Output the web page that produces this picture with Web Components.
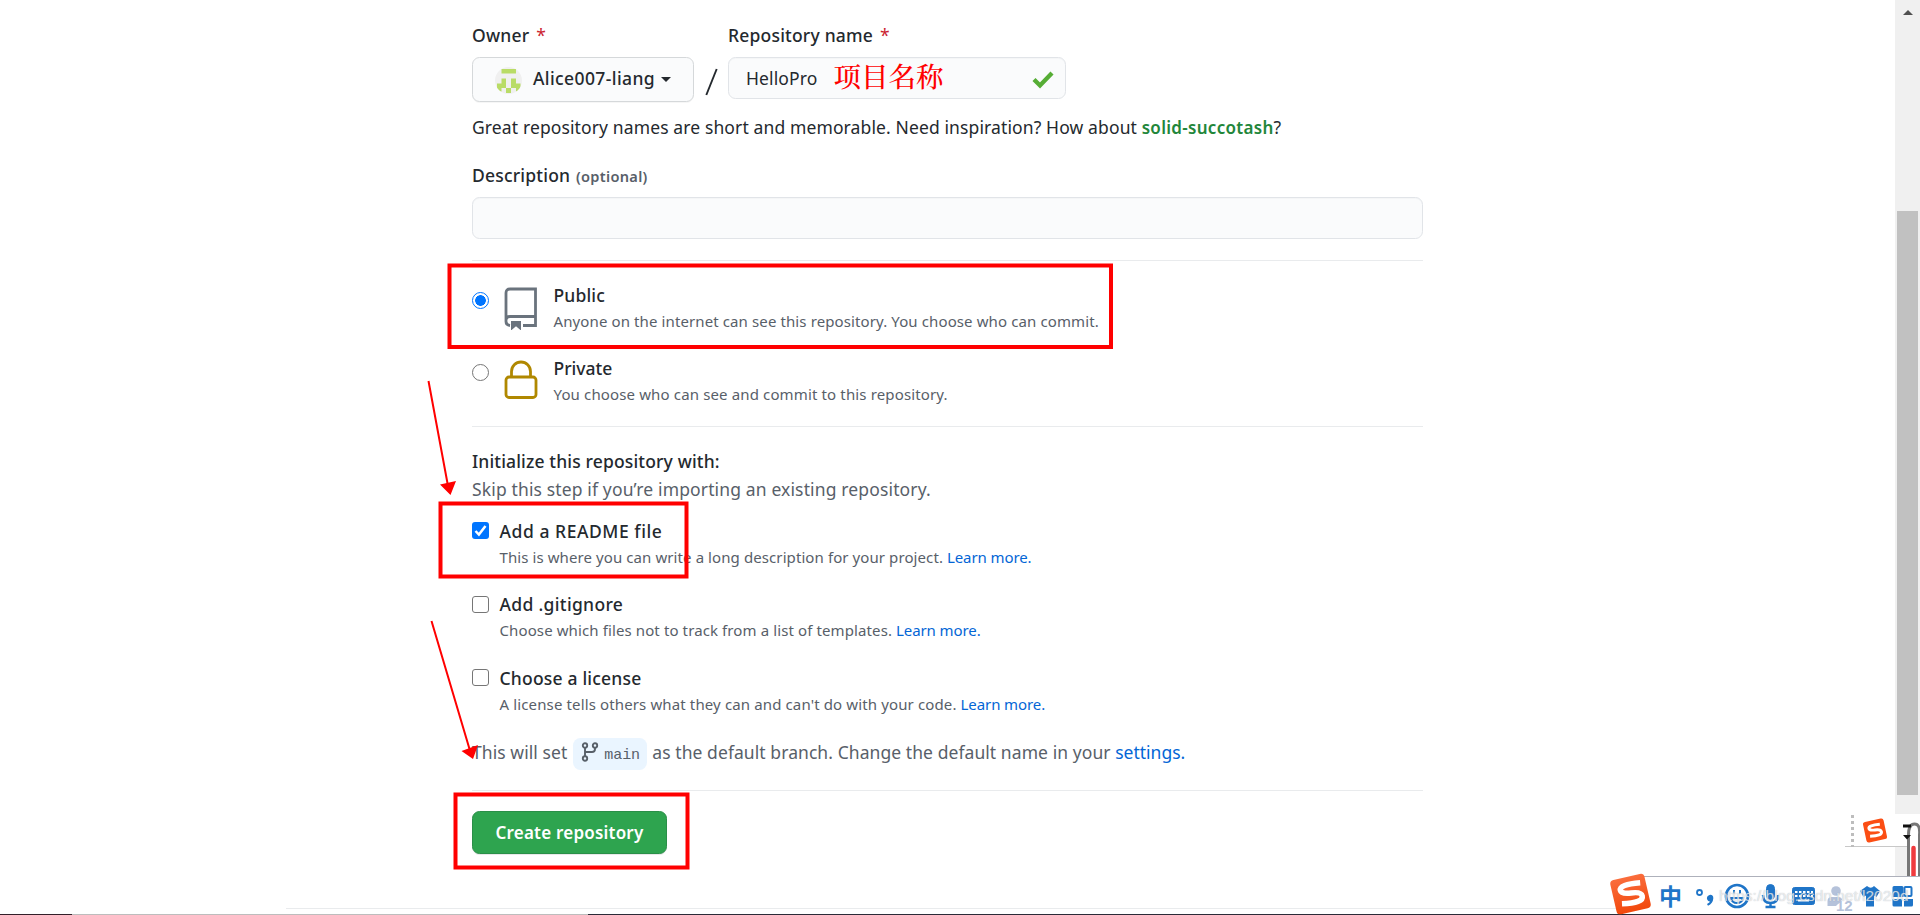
<!DOCTYPE html>
<html lang="en">
<head>
<meta charset="utf-8">
<title>Create a New Repository</title>
<style>
  html,body{margin:0;height:100%;overflow:hidden;background:#fff}
  body{font:400 17.5px/26px "Noto Sans","Noto Sans CJK SC",sans-serif;color:#24292e;letter-spacing:.12px}
</style>
</head>
<body>
<new-repo-page></new-repo-page>

<script>
/* small base: every element gets an open root with its own style + markup */
class View extends HTMLElement {
    constructor() {
        super();
        this.attachShadow({ mode: 'open' }).innerHTML = this.render();
    }
    render() { return ''; }
}

/* ---------- field-label ---------- */
class FieldLabel extends View {
    render() {
        return `
      <style>
        :host{display:block;height:26px;font-weight:500;letter-spacing:.2px;white-space:nowrap}
        .star{display:none;color:#cb2431;font-weight:400;margin-left:7px}
        :host([required]) .star{display:inline}
        ::slotted(small){font-size:14.6px;font-weight:600;color:#586069;letter-spacing:.3px;margin-left:1px}
      </style>
      <slot></slot><span class="star">*</span>`;
    }
}

/* ---------- owner-select ---------- */
class OwnerSelect extends View {
    render() {
        return `
      <style>
        :host{display:flex;align-items:center;box-sizing:border-box;width:222px;height:45px;padding-left:22px;
              border:1px solid #d5d8da;border-radius:7.5px;background:#fafbfc;
              box-shadow:0 1px 0 rgba(27,31,35,.04);font-weight:500;letter-spacing:.4px;white-space:nowrap}
        .avatar{width:27px;height:27px;margin:2px 11px 0 0}
        .name{margin-top:-3px}
        .caret{border:5.5px solid transparent;border-top-color:#24292e;border-bottom:0;margin-left:6px}
      </style>
      <svg class="avatar" viewBox="0 0 27 27">
        <clipPath id="c"><circle cx="13.5" cy="13.5" r="13.5"/></clipPath>
        <g clip-path="url(#c)">
          <path fill="#f0f0f0" d="M0 0h27v27H0z"/>
          <path fill="#b9dc66" d="M6.500 2H21v4.500H6.500zM6.500 11.500h4.500v5h5v-5h5v5h4.500v8H21V21h-5v0h-5v0H6.500v3.500H2v-8h4.500z"/>
          <path fill="#b9dc66" d="M11 21h5v5h-5z"/>
          <path fill="#f0f0f0" d="M11 16h5v5h-5z"/>
        </g>
      </svg>
      <span class="name"><slot></slot></span><span class="caret"></span>`;
    }
}

/* ---------- text-field ---------- */
class TextField extends View {
    render() {
        return `
      <style>
        :host{display:flex;align-items:center;box-sizing:border-box;height:42px;padding:0 12px 1px 17px;
              border:1px solid #e1e4e8;border-radius:7.5px;background:#fafbfc;
              box-shadow:inset 0 1px 0 rgba(225,228,232,.2);white-space:nowrap}
        svg{display:none;width:22px;height:18px;margin:4px -1px 0 auto}
        :host([valid]) svg{display:block}
      </style>
      <slot></slot>
      <svg viewBox="0 0 22 18"><path d="M2 8.500l6 6L20 2" fill="none" stroke="#56ad35" stroke-width="4.300"/></svg>`;
    }
}

/* ---------- choice-row: radio or checkbox, optional icon, title and note ---------- */
class ChoiceRow extends View {
    render() {
        return `
      <style>
        :host{display:flex;height:51px;white-space:nowrap}
        .mark{flex:none;box-sizing:border-box;width:17px;height:17px;margin-top:4.5px;border:1px solid #767676;border-radius:3px;background:#fff}
        :host([kind=radio]) .mark{border-radius:50%;margin-top:9px}
        :host([kind=radio][checked]) .mark{margin-top:10px;border:1.5px solid #0075ff;background:radial-gradient(circle,#0075ff 0 5px,#fff 5.600px)}
        :host([kind=check][checked]) .mark{border:0;background:#0075ff}
        .tick{display:none}
        :host([kind=check][checked]) .tick{display:block}
        .text{margin-left:10.5px}
        :host([kind=radio]) .text{margin-left:15.5px}
        .title{height:28px;font-weight:500;letter-spacing:var(--title-ls,.16px)}
        .note{height:23px;font-size:15px;line-height:23px;color:#586069;letter-spacing:var(--note-ls,.11px)}
        ::slotted([slot=icon]){flex:none;width:34px;margin:5px 0 0 15px}
        ::slotted(a){color:#0366d6;letter-spacing:-.1px}
      </style>
      <span class="mark"><svg class="tick" viewBox="0 0 17 17"><path d="M3.500 9l3.400 3.600L13.500 4" fill="none" stroke="#fff" stroke-width="2.500"/></svg></span>
      <slot name="icon"></slot>
      <div class="text"><div class="title"><slot name="title"></slot></div><div class="note"><slot></slot></div></div>`;
    }
}

/* ---------- branch-badge ---------- */
class BranchBadge extends View {
    render() {
        return `
      <style>
        :host{display:flex;align-items:center;box-sizing:border-box;width:74px;height:32px;padding-left:8px;margin:0 5px 0 6px;
              border-radius:7.5px;background:#eaf5ff;font:15px/20px "Liberation Mono","DejaVu Sans Mono",monospace;letter-spacing:-.1px}
        svg{width:18px;height:20px;margin:-4px 5px 0 0}
        .name{margin-top:3px}
      </style>
      <svg viewBox="0 0 18 20" fill="none" stroke="#586069" stroke-width="1.900">
        <circle cx="4" cy="3.500" r="2.200"/><circle cx="14" cy="3.500" r="2.200"/><circle cx="4" cy="16.500" r="2.200"/>
        <path d="M4 5.700v8.600M14 5.700v1.300q0 3-3 3H4"/>
      </svg>
      <span class="name"><slot></slot></span>`;
    }
}

/* ---------- primary-button ---------- */
class PrimaryButton extends View {
    render() {
        return `
      <style>
        :host{display:flex;align-items:center;justify-content:center;box-sizing:border-box;width:195px;height:43px;
              border:1px solid #2a8f48;border-radius:7.5px;background:#2ea44f;box-shadow:0 1px 0 rgba(27,31,35,.1);
              color:#fff;font-size:17px;font-weight:600;letter-spacing:.21px;white-space:nowrap}
      </style>
      <slot></slot>`;
    }
}

/* ---------- repo-form ---------- */
class RepoForm extends View {
    render() {
        return `
      <style>
        :host{display:block;box-sizing:border-box;width:951px;margin-left:472px;padding-top:22px}
        .names{display:flex}
        .owner{width:222px}
        .gap{width:34px;display:flex;justify-content:center;padding-top:46px;box-sizing:border-box}
        .gap svg{width:13px;height:28px}
        .repo{width:338px}
        field-label{margin-bottom:9px}
        .hint{height:26px;margin-top:12px;white-space:nowrap}
        .hint b{font-weight:600;font-size:17px;color:#22863a;letter-spacing:.3px}
        .desc{margin-top:22px}
        .hr{height:1px;background:#e9ebed}
        choice-row + choice-row{margin-top:22.5px}
        .init{height:28px;margin-top:21px;font-weight:500;letter-spacing:.15px}
        .skip{height:26px;color:#586069;letter-spacing:.14px}
        .checks{margin-top:15.5px}
        .branch{display:flex;align-items:center;height:32px;margin-top:22.5px;color:#586069;white-space:pre;letter-spacing:.07px}
        .branch span,.branch a{margin-top:-5px}
        .branch a{color:#0366d6;letter-spacing:0}
      </style>
      <div class="names">
        <div class="owner"><field-label required>Owner</field-label><owner-select>Alice007-liang</owner-select></div>
        <div class="gap"><svg viewBox="0 0 13 28"><path d="M1.300 27L11.700 1" stroke="#24292e" stroke-width="1.900"/></svg></div>
        <div class="repo"><field-label required>Repository name</field-label><text-field valid>HelloPro</text-field></div>
      </div>
      <div class="hint">Great repository names are short and memorable. Need inspiration? How about <b>solid-succotash</b>?</div>
      <field-label class="desc">Description <small>(optional)</small></field-label>
      <text-field></text-field>
      <div class="hr" style="margin-top:21px"></div>

      <choice-row kind="radio" checked style="margin-top:20.5px">
        <svg slot="icon" viewBox="0 0 34 43" height="43" fill="none" stroke="#6a737d" stroke-width="2.800">
          <path d="M6 38.500q-4-.5-4-4V6q0-4 4-4h25.500v36.500H19M2 33q0-3.500 4-3.500h25.500"/>
          <path d="M7 34h10v9.500l-5-4.200-5 4.200z" fill="#6a737d" stroke="none"/>
        </svg>
        <span slot="title">Public</span>Anyone on the internet can see this repository. You choose who can commit.
      </choice-row>
      <choice-row kind="radio" style="--title-ls:0;--note-ls:.14px">
        <svg slot="icon" viewBox="0 0 34 43" height="43" fill="none" stroke="#b08800" stroke-width="2.800">
          <rect x="2" y="17" width="30" height="20.500" rx="3"/>
          <path d="M7.500 17v-5.500a9.500 9.500 0 0 1 19 0v5.500"/>
        </svg>
        <span slot="title">Private</span>You choose who can see and commit to this repository.
      </choice-row>
      <div class="hr" style="margin-top:20px"></div>

      <div class="init">Initialize this repository with:</div>
      <div class="skip">Skip this step if you’re importing an existing repository.</div>
      <div class="checks">
        <choice-row kind="check" checked style="--title-ls:.55px;--note-ls:.09px"><span slot="title">Add a README file</span>This is where you can write a long description for your project. <a>Learn more.</a></choice-row>
        <choice-row kind="check" style="--title-ls:.33px"><span slot="title">Add .gitignore</span>Choose which files not to track from a list of templates. <a>Learn more.</a></choice-row>
        <choice-row kind="check" style="--title-ls:.2px;--note-ls:.13px"><span slot="title">Choose a license</span>A license tells others what they can and can't do with your code. <a>Learn more.</a></choice-row>
      </div>
      <div class="branch"><span>This will set</span><branch-badge>main</branch-badge><span>as the default branch. Change the default name in your </span><a>settings.</a></div>
      <div class="hr" style="margin:20px 0"></div>
      <primary-button>Create repository</primary-button>`;
    }
}

/* ---------- page-scrollbar ---------- */
class PageScrollbar extends View {
    render() {
        return `
      <style>
        :host{display:flex;flex-direction:column;align-items:center;width:25px;height:877px;background:#f0f0f0}
        .up{border:5.5px solid transparent;border-top:0;border-bottom-color:#505050;margin:10px 0 195.5px}
        .thumb{width:21px;height:584px;background:#c1c1c1}
      </style>
      <i class="up"></i><i class="thumb"></i>`;
    }
}

/* ---------- mark-up: red boxes, arrows and note drawn over the form ---------- */
class MarkUp extends View {
    render() {
        return `
      <style>
        :host{position:absolute;inset:0;pointer-events:none}
        svg{position:absolute;left:0;top:0}
        .note{position:absolute;left:833.5px;top:57px;font:500 27.5px/36px "Noto Serif CJK SC","Noto Sans CJK SC",serif;color:#f00;letter-spacing:0;white-space:nowrap}
      </style>
      <svg width="1920" height="915" fill="none" stroke="#f00">
        <g stroke-width="4">
          <rect x="449.500" y="265.500" width="661.500" height="81.500"/>
          <rect x="440.500" y="503.500" width="246" height="73"/>
          <rect x="455.500" y="794.500" width="232" height="73"/>
        </g>
        <path stroke-width="2" d="M428.500 381L448 486M431.500 621L469.500 749"/>
        <path fill="#f00" stroke="none" d="M440 484.500l16-3.500-5.500 14zM461.500 751l16.500-6-5 14z"/>
      </svg>
      <span class="note"><slot></slot></span>`;
    }
}

/* ---------- ime-bar: input method toolbar in the corner ---------- */
class ImeBar extends View {
    render() {
        return `
      <style>
        :host{position:absolute;right:0;bottom:0;width:320px;height:110px}
        svg{display:block}
        .zh{position:absolute;left:59px;top:78px;font:700 23px/24px "Noto Sans CJK SC",sans-serif;color:#1f75c8;letter-spacing:0}
        .mark{position:absolute;left:119px;top:79px;font:15.5px/24px "Liberation Sans",sans-serif;color:rgba(255,255,255,.68);
              text-shadow:0 0 1px rgba(120,130,145,.6);letter-spacing:0;white-space:nowrap}
        .num{position:absolute;left:236px;top:92px;font:700 15px/18px "Liberation Sans",sans-serif;color:#b5c2da;letter-spacing:0}
      </style>
      <svg width="320" height="110" viewBox="1600 805 320 110" fill="none">
        <!-- minimised bar -->
        <path fill="#fff" d="M1845 814h75v32h-75z"/>
        <path stroke="#c8c8c8" d="M1845 846.500h62"/>
        <path stroke="#bdbdbd" stroke-width="3" stroke-dasharray="3" d="M1852.500 815v32"/>
        <g transform="rotate(-12 1875 830.500)">
          <rect x="1864.500" y="820" width="21" height="21" rx="2.500" fill="#fb4e14"/>
          <path d="M1881 825.500q-11.500-1.500-11.500 1.700 0 2.300 5.500 2.700 6 .4 6 3.300 0 4-12 2" stroke="#fff" stroke-width="3"/>
        </g>
        <path fill="#fff" d="M1909 846v31h11v-22q0-31-8-31z"/>
        <path stroke="#777" stroke-width="3" d="M1908.500 877v-42q0-11 6-11t5 11v42"/>
        <path stroke="#f03b3e" stroke-width="4.500" stroke-linecap="round" d="M1913.500 848v32"/>
        <path fill="#111" d="M1903 824.500h8v3h-8zM1903 835h8l-4 4.500z"/>
        <!-- toolbar -->
        <path fill="#fff" d="M1627 877h293v37h-293z"/>
        <path stroke="#aeb1bb" d="M1640 876.500h280"/>
        <linearGradient id="g" x2="0" y2="1"><stop stop-color="#fa6d3c"/><stop offset="1" stop-color="#f2480c"/></linearGradient>
        <g transform="rotate(-13 1631 894)">
          <rect x="1613" y="876.500" width="35" height="35" rx="4" fill="url(#g)"/>
          <path d="M1642.500 885q-21-3-21 3 0 4 10 5t10 5.500q0 7-21.500 3" stroke="#fff" stroke-width="5.500"/>
        </g>
        <g stroke="#1f75c8" fill="#1f75c8">
          <circle cx="1699.500" cy="892.500" r="2.500" fill="none" stroke-width="1.800"/>
          <path stroke="none" d="M1712.500 900.500a3.300 3.300 0 1 1-3-5.600q4-.5 3.800 3.600-.4 5-5.300 7.200l-1-1.600q3-1.300 3.300-3z"/>
          <circle cx="1737" cy="896" r="11" fill="none" stroke-width="2.600"/>
          <path fill="none" stroke-width="2" d="M1731 898q1 5 6 5t6-5zM1734 890v4M1740 890v4"/>
          <rect x="1766.500" y="884.500" width="8" height="15" rx="4"/>
          <path fill="none" stroke-width="2.500" d="M1763 895q0 8 7.500 8t7.500-8M1770.500 903v4M1765.500 907h10"/>
          <rect x="1792.500" y="887.500" width="22" height="17" rx="2"/>
          <path stroke="none" d="M1860 891l7-5q4 3.500 7 0l6 5-3.500 6-2.500-1.500v11h-8v-11l-2.500 1.500z"/>
          <path stroke="none" d="M1894 886h8q1.500 0 1.500 1.500v9.500h-11v-9.500q0-1.500 1.500-1.500zM1892.500 899h9.500v7.500h-8q-1.500 0-1.500-1.500zM1904 899h9v6q0 1.500-1.500 1.500h-7.500z"/>
          <rect x="1904.500" y="887" width="7" height="9" rx="1" fill="none" stroke-width="2"/>
        </g>
        <path stroke="#fff" stroke-width="2" stroke-dasharray="2.500 1.500" d="M1795 892h18M1795 896h18"/>
        <path stroke="#fff" stroke-width="2" d="M1798 900.500h11"/>
        <circle cx="1836" cy="891" r="4.800" fill="#b5c2da"/>
        <path fill="#b5c2da" d="M1827.500 906v-5q0-4 4.500-4h6q4 0 4 3l-6 6z"/>
      </svg>
      <span class="zh">中</span><span class="num">12</span>
      <span class="mark">https://blog.csdn.net/l2020d</span>`;
    }
}

/* ---------- new-repo-page ---------- */
class NewRepoPage extends View {
    render() {
        return `
      <style>
        :host{display:flex;flex-direction:column;position:relative;width:1920px;height:915px;overflow:hidden;background:#fff}
        .body{display:flex;justify-content:space-between;height:908px}
        .foot{height:1px;width:1346px;margin-left:286px;background:#e9ebed}
        .edge{height:1px;margin-top:5px;background:linear-gradient(90deg,#33202a 72px,#bdbdbd 72px 588px,#2b2b38 588px)}
      </style>
      <div class="body"><repo-form></repo-form><page-scrollbar></page-scrollbar></div>
      <div class="foot"></div>
      <ime-bar></ime-bar>
      <div class="edge"></div>
      <mark-up>项目名称</mark-up>`;
    }
}

customElements.define('field-label', FieldLabel);
customElements.define('owner-select', OwnerSelect);
customElements.define('text-field', TextField);
customElements.define('choice-row', ChoiceRow);
customElements.define('branch-badge', BranchBadge);
customElements.define('primary-button', PrimaryButton);
customElements.define('repo-form', RepoForm);
customElements.define('page-scrollbar', PageScrollbar);
customElements.define('mark-up', MarkUp);
customElements.define('ime-bar', ImeBar);
customElements.define('new-repo-page', NewRepoPage);
</script>
</body>
</html>
